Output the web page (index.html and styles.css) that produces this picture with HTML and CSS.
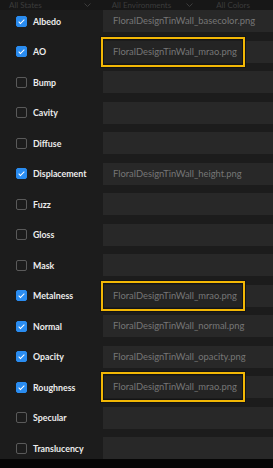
FILE: index.html
```html
<!DOCTYPE html>
<html lang="en">
<head>
    <meta charset="UTF-8">
    <meta name="viewport" content="width=device-width, initial-scale=1.0">
    <title>Texture Maps</title>
    <link rel="stylesheet" href="styles.css">
</head>
<body>

    <div class="panel">
        <div class="filters">
            <span class="filter f-states">All States</span>
            <svg class="chev f-c1" width="7" height="4" viewBox="0 0 7 4"><path d="M0.5 0.5 L3.5 3.5 L6.5 0.5" fill="none" stroke="#3c3c3c" stroke-width="1"/></svg>
            <span class="filter f-env">All Environments</span>
            <svg class="chev f-c2" width="7" height="4" viewBox="0 0 7 4"><path d="M0.5 0.5 L3.5 3.5 L6.5 0.5" fill="none" stroke="#3c3c3c" stroke-width="1"/></svg>
            <span class="filter f-colors">All Colors</span>
        </div>

        <div class="map-list">
            <div class="map-row">
                <label class="map-name"><span class="check on"></span>Albedo</label>
                <div class="map-file">FloralDesignTinWall_basecolor.png</div>
            </div>
            <div class="map-row">
                <label class="map-name"><span class="check on"></span>AO</label>
                <div class="map-file marked">FloralDesignTinWall_mrao.png<span class="mark"></span></div>
            </div>
            <div class="map-row">
                <label class="map-name"><span class="check"></span>Bump</label>
                <div class="map-file"></div>
            </div>
            <div class="map-row">
                <label class="map-name"><span class="check"></span>Cavity</label>
                <div class="map-file"></div>
            </div>
            <div class="map-row">
                <label class="map-name"><span class="check"></span>Diffuse</label>
                <div class="map-file"></div>
            </div>
            <div class="map-row">
                <label class="map-name"><span class="check on"></span>Displacement</label>
                <div class="map-file">FloralDesignTinWall_height.png</div>
            </div>
            <div class="map-row">
                <label class="map-name"><span class="check"></span>Fuzz</label>
                <div class="map-file"></div>
            </div>
            <div class="map-row">
                <label class="map-name"><span class="check"></span>Gloss</label>
                <div class="map-file"></div>
            </div>
            <div class="map-row">
                <label class="map-name"><span class="check"></span>Mask</label>
                <div class="map-file"></div>
            </div>
            <div class="map-row">
                <label class="map-name"><span class="check on"></span>Metalness</label>
                <div class="map-file marked">FloralDesignTinWall_mrao.png<span class="mark"></span></div>
            </div>
            <div class="map-row">
                <label class="map-name"><span class="check on"></span>Normal</label>
                <div class="map-file">FloralDesignTinWall_normal.png</div>
            </div>
            <div class="map-row">
                <label class="map-name"><span class="check on"></span>Opacity</label>
                <div class="map-file">FloralDesignTinWall_opacity.png</div>
            </div>
            <div class="map-row">
                <label class="map-name"><span class="check on"></span>Roughness</label>
                <div class="map-file marked">FloralDesignTinWall_mrao.png<span class="mark"></span></div>
            </div>
            <div class="map-row">
                <label class="map-name"><span class="check"></span>Specular</label>
                <div class="map-file"></div>
            </div>
            <div class="map-row">
                <label class="map-name"><span class="check"></span>Translucency</label>
                <div class="map-file"></div>
            </div>
        </div>

        <div class="bottom-edge"></div>
    </div>

</body>
</html>
```

FILE: styles.css
```css
:root {
    --bg: #1c1c1c;
    --field: #282828;
    --label: #ececec;
    --muted: #767676;
    --blue: #2a8cf0;
    --mark: #f2b705;
}

* {
    margin: 0;
    padding: 0;
    box-sizing: border-box;
}

body {
    width: 273px;
    height: 468px;
    overflow: hidden;
    background-color: var(--bg);
    font-family: Lato, 'Noto Sans', sans-serif;
}

.panel {
    display: flex;
    flex-direction: column;
    height: 468px;
}

/* --- faded filter bar, mostly scrolled under --- */
.filters {
    height: 10px;
    display: flex;
    align-items: center;
    padding-left: 9px;
    background-color: #171717;
    font-size: 8px;
    line-height: 10px;
    color: #3c3c3c;
    white-space: nowrap;
}
.f-c1 { margin-left: 42px; }
.f-env { margin-left: 21px; }
.f-c2 { margin-left: 15px; }
.f-colors { margin-left: 23px; }

/* --- map rows --- */
.map-list {
    flex: 1;
    display: flex;
    flex-direction: column;
    gap: 8.5px;
}

.map-row {
    display: grid;
    grid-template-columns: 103px 1fr;
    height: 22px;
    align-items: center;
}

.map-name {
    display: flex;
    align-items: center;
    gap: 6px;
    padding-left: 16px;
    font-size: 8.8px;
    font-weight: 700;
    color: var(--label);
    white-space: nowrap;
}

.check {
    width: 11px;
    height: 11px;
    border: 1px solid #5a5a5a;
    border-radius: 2px;
    flex-shrink: 0;
    position: relative;
}
.check.on {
    background-color: var(--blue);
    border-color: var(--blue);
}
.check.on::after {
    content: '';
    position: absolute;
    left: 3px;
    top: 1px;
    width: 2px;
    height: 5px;
    border-right: 1.5px solid #fff;
    border-bottom: 1.5px solid #fff;
    transform: rotate(45deg);
}

.map-file {
    height: 22px;
    background-color: var(--field);
    padding-left: 10px;
    font-size: 9.4px;
    line-height: 22px;
    color: var(--muted);
    white-space: nowrap;
    position: relative;
}

/* yellow annotation box */
.mark {
    position: absolute;
    left: -2px;
    top: -4px;
    width: 144px;
    height: 30px;
    border: 2px solid var(--mark);
    box-shadow: inset 0 0 0 1px #141414, 0 0 0 1px #141414;
}
.marked {
    background: linear-gradient(to right, #242424 140px, var(--field) 140px);
}

.bottom-edge {
    height: 9px;
    background-color: #060606;
}
```
